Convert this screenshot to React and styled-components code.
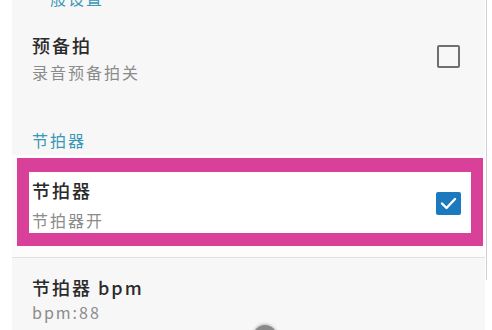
import styled, { createGlobalStyle } from "styled-components";

const GlobalStyle = createGlobalStyle`
    html, body {
        margin: 0;
        padding: 0;
        background: #ffffff;
    }
    #root {
        width: 492px;
        height: 330px;
        overflow: hidden;
    }
`

const Frame = styled.div`
    width: 492px;
    height: 330px;
    display: flex;
    position: relative;
    overflow: hidden;
    font-family: "Noto Sans CJK SC", "Noto Sans", sans-serif;
`

const Gutter = styled.div`
    width: 12px;
    flex-shrink: 0;
    background: #ffffff;
`

const Content = styled.div`
    flex: 1;
    min-width: 0;
    background: #f7f7f7;
    display: flex;
    flex-direction: column;
`

const ScrollTrack = styled.div`
    width: 7px;
    flex-shrink: 0;
    background: #ffffff;
    display: flex;
`

const ScrollLine = styled.div`
    width: 1px;
    height: 280px;
    margin-left: 1px;
    background: #cfcfcf;
`

const SectionHeader = styled.div`
    padding-left: 20px;
    margin-top: ${p => p.$top}px;
    font-size: 16px;
    line-height: 20px;
    letter-spacing: 2px;
    color: #3a98b6;
`

const Row = styled.div`
    display: flex;
    align-items: center;
    padding: ${p => p.$pad};
`

const Texts = styled.div`
    flex: 1;
    display: flex;
    flex-direction: column;
`

const Title = styled.div`
    font-size: 18px;
    line-height: 24px;
    font-weight: 500;
    letter-spacing: 2px;
    color: #2a2a2a;
`

const Subtitle = styled.div`
    margin-top: ${p => p.$gap || 4}px;
    font-size: 16px;
    line-height: 22px;
    letter-spacing: 2px;
    color: #8b8b8b;
`

const SelectedRow = styled.div`
    margin-top: 5px;
    padding: 3px 2px 11px 5px;
    background: #fcfcfc;
    border-bottom: 1px solid #e1e1e1;
`

const Highlight = styled.div`
    border: 12px solid #d8409a;
    border-top-width: 14px;
    border-bottom-width: 13px;
    height: 55px;
    overflow: hidden;
    background: #ffffff;
    display: flex;
    padding: 6px 10px 0 3px;
`

const Box = styled.div`
    width: 19px;
    height: 19px;
    border: 2px solid #6f6f6f;
    border-radius: 2px;
    margin-right: 25px;
    margin-top: ${p => p.$top || 0}px;
`

const CheckedBox = styled.div`
    width: 25px;
    height: 23px;
    border-radius: 2px;
    background: #1c79bd;
    display: flex;
    align-items: center;
    justify-content: center;
    margin-top: 14px;
`

const FloatingDot = styled.div`
    position: absolute;
    left: 253px;
    top: 325px;
    width: 24px;
    height: 24px;
    border-radius: 50%;
    background: #8a8a8a;
    box-shadow: 0 -1px 3px rgba(0, 0, 0, 0.25);
`

const App = () => {
    return (
        <Frame>
            <GlobalStyle />
            <Gutter />
            <Content>
                <SectionHeader $top={-12}>一般设置</SectionHeader>
                <Row $pad="25px 0 0 20px">
                    <Texts>
                        <Title>预备拍</Title>
                        <Subtitle>录音预备拍关</Subtitle>
                    </Texts>
                    <Box $top={-4} />
                </Row>
                <SectionHeader $top={47}>节拍器</SectionHeader>
                <SelectedRow>
                    <Highlight>
                        <Texts>
                            <Title>节拍器</Title>
                            <Subtitle $gap={7}>节拍器开</Subtitle>
                        </Texts>
                        <CheckedBox>
                            <svg width="17" height="13" viewBox="0 0 17 13">
                                <path d="M2 6.5 L6.5 11 L15 2" fill="none" stroke="#ffffff" strokeWidth="2.4" strokeLinecap="round" strokeLinejoin="round" />
                            </svg>
                        </CheckedBox>
                    </Highlight>
                </SelectedRow>
                <Row $pad="17px 0 0 20px">
                    <Texts>
                        <Title>节拍器 bpm</Title>
                        <Subtitle $gap={2}>bpm:88</Subtitle>
                    </Texts>
                </Row>
            </Content>
            <ScrollTrack>
                <ScrollLine />
            </ScrollTrack>
            <FloatingDot />
        </Frame>
    );
};

export default App;
